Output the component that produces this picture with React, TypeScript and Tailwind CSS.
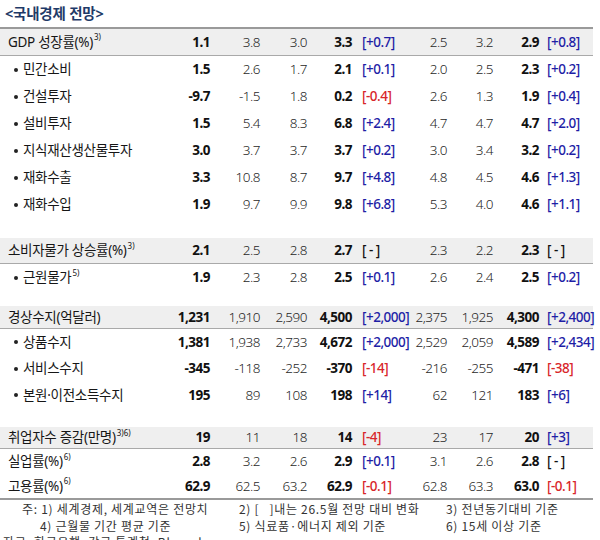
import React from 'react';

type Tone = 'b' | 'r' | 'k';
type RowData = {
    label: string;
    sup?: string;
    bullet?: boolean;
    v: string[];
    d1: [string, Tone];
    d2: [string, Tone];
};

const rows: Record<string, RowData> = {
    gdp: { label: 'GDP 성장률(%)', sup: '3)', v: ['1.1', '3.8', '3.0', '3.3', '2.5', '3.2', '2.9'], d1: ['[+0.7]', 'b'], d2: ['[+0.8]', 'b'] },
    c1: { label: '민간소비', bullet: true, v: ['1.5', '2.6', '1.7', '2.1', '2.0', '2.5', '2.3'], d1: ['[+0.1]', 'b'], d2: ['[+0.2]', 'b'] },
    c2: { label: '건설투자', bullet: true, v: ['-9.7', '-1.5', '1.8', '0.2', '2.6', '1.3', '1.9'], d1: ['[-0.4]', 'r'], d2: ['[+0.4]', 'b'] },
    c3: { label: '설비투자', bullet: true, v: ['1.5', '5.4', '8.3', '6.8', '4.7', '4.7', '4.7'], d1: ['[+2.4]', 'b'], d2: ['[+2.0]', 'b'] },
    c4: { label: '지식재산생산물투자', bullet: true, v: ['3.0', '3.7', '3.7', '3.7', '3.0', '3.4', '3.2'], d1: ['[+0.2]', 'b'], d2: ['[+0.2]', 'b'] },
    c5: { label: '재화수출', bullet: true, v: ['3.3', '10.8', '8.7', '9.7', '4.8', '4.5', '4.6'], d1: ['[+4.8]', 'b'], d2: ['[+1.3]', 'b'] },
    c6: { label: '재화수입', bullet: true, v: ['1.9', '9.7', '9.9', '9.8', '5.3', '4.0', '4.6'], d1: ['[+6.8]', 'b'], d2: ['[+1.1]', 'b'] },
    cpi: { label: '소비자물가 상승률(%)', sup: '3)', v: ['2.1', '2.5', '2.8', '2.7', '2.3', '2.2', '2.3'], d1: ['[ - ]', 'k'], d2: ['[ - ]', 'k'] },
    core: { label: '근원물가', sup: '5)', bullet: true, v: ['1.9', '2.3', '2.8', '2.5', '2.6', '2.4', '2.5'], d1: ['[+0.1]', 'b'], d2: ['[+0.2]', 'b'] },
    ca: { label: '경상수지(억달러)', v: ['1,231', '1,910', '2,590', '4,500', '2,375', '1,925', '4,300'], d1: ['[+2,000]', 'b'], d2: ['[+2,400]', 'b'] },
    ca1: { label: '상품수지', bullet: true, v: ['1,381', '1,938', '2,733', '4,672', '2,529', '2,059', '4,589'], d1: ['[+2,000]', 'b'], d2: ['[+2,434]', 'b'] },
    ca2: { label: '서비스수지', bullet: true, v: ['-345', '-118', '-252', '-370', '-216', '-255', '-471'], d1: ['[-14]', 'r'], d2: ['[-38]', 'r'] },
    ca3: { label: '본원·이전소득수지', bullet: true, v: ['195', '89', '108', '198', '62', '121', '183'], d1: ['[+14]', 'b'], d2: ['[+6]', 'b'] },
    emp: { label: '취업자수 증감(만명)', sup: '3)6)', v: ['19', '11', '18', '14', '23', '17', '20'], d1: ['[-4]', 'r'], d2: ['[+3]', 'b'] },
    un: { label: '실업률(%)', sup: '6)', v: ['2.8', '3.2', '2.6', '2.9', '3.1', '2.6', '2.8'], d1: ['[+0.1]', 'b'], d2: ['[ - ]', 'k'] },
    er: { label: '고용률(%)', sup: '6)', v: ['62.9', '62.5', '63.2', '62.9', '62.8', '63.3', '63.0'], d1: ['[-0.1]', 'r'], d2: ['[-0.1]', 'r'] },
};

const toneClass: Record<Tone, string> = {
    b: 'text-[#1e1ea6]',
    r: 'text-[#d8262a]',
    k: 'text-[#111]',
};

const Row: React.FC<{ r: RowData; h: string; gray?: boolean; line?: boolean }> = ({ r, h, gray, line }) => {
    const [a, b, c, d, e, f, g] = r.v;
    return (
        <div
            className={`grid grid-cols-[170px_40px_50px_47px_45px_58px_37px_46px_46px_54px] items-center text-[13.5px] tracking-[-0.5px] ${h} ${gray ? 'bg-[#efefef]' : ''} ${line ? 'border-b border-[#a9a9a9]' : ''}`}
        >
            <div className={`flex items-center text-[#161616] whitespace-nowrap tracking-[-0.3px] ${r.bullet ? 'pl-[14px]' : 'pl-[8px]'}`}>
                {r.bullet && <span className="mr-[5px] w-[4px] h-[4px] rounded-full bg-[#222] shrink-0" />}
                <span>{r.label}</span>
                {r.sup && <sup className="text-[8px] -top-[5px] ml-[1px] tracking-normal">{r.sup}</sup>}
            </div>
            <div className="text-right font-bold text-[#111]">{a}</div>
            <div className="text-right font-light text-[#1f1f1f]">{b}</div>
            <div className="text-right font-light text-[#1f1f1f]">{c}</div>
            <div className="text-right font-bold text-[#111]">{d}</div>
            <div className={`pl-[10px] whitespace-nowrap font-medium ${toneClass[r.d1[1]]}`}>{r.d1[0]}</div>
            <div className="text-right font-light text-[#1f1f1f]">{e}</div>
            <div className="text-right font-light text-[#1f1f1f]">{f}</div>
            <div className="text-right font-bold text-[#111]">{g}</div>
            <div className={`pl-[8px] whitespace-nowrap font-medium ${toneClass[r.d2[1]]}`}>{r.d2[0]}</div>
        </div>
    );
};

export default function App() {
    return (
        <div
            className="w-[600px] h-[540px] overflow-hidden bg-white"
            style={{ fontFamily: '"Noto Sans", "Noto Sans CJK KR", sans-serif' }}
        >
            <div className="h-[27px] flex items-center pl-[5px] pt-[1px] text-[14.5px] font-bold text-[#1f3a68] tracking-[-0.2px]">
                &lt;국내경제 전망&gt;
            </div>
            <div className="w-[593px] border-t-2 border-[#9a9a9a]">
                <Row r={rows.gdp} h="h-[27px]" gray line />
                <Row r={rows.c1} h="h-[27px]" />
                <Row r={rows.c2} h="h-[27px]" />
                <Row r={rows.c3} h="h-[27px]" />
                <Row r={rows.c4} h="h-[27px]" />
                <Row r={rows.c5} h="h-[27px]" />
                <Row r={rows.c6} h="h-[27px]" />
                <div className="h-[20px]" />
                <Row r={rows.cpi} h="h-[26px]" gray line />
                <Row r={rows.core} h="h-[27px]" />
                <div className="h-[15px]" />
                <Row r={rows.ca} h="h-[23px]" gray line />
                <Row r={rows.ca1} h="h-[26px]" />
                <Row r={rows.ca2} h="h-[27px]" />
                <Row r={rows.ca3} h="h-[26px]" />
                <div className="h-[19px]" />
                <Row r={rows.emp} h="h-[22px]" gray line />
                <Row r={rows.un} h="h-[25px]" />
                <Row r={rows.er} h="h-[24px]" />
            </div>
            <div
                className="w-[593px] border-t-2 border-[#9a9a9a] pt-[1px] text-[12px] leading-[16.5px] text-[#333] tracking-[0.7px]"
                style={{ fontFamily: '"Noto Sans CJK KR", sans-serif' }}
            >
                <div className="flex h-[16.5px]">
                    <div className="w-[239px] pl-[22px] whitespace-nowrap">주: 1) 세계경제, 세계교역은 전망치</div>
                    <div className="w-[207px] whitespace-nowrap">2) [&nbsp;&nbsp;&nbsp;]내는 26.5월 전망 대비 변화</div>
                    <div className="whitespace-nowrap">3) 전년동기대비 기준</div>
                </div>
                <div className="flex h-[16.5px]">
                    <div className="w-[239px] pl-[40px] whitespace-nowrap">4) 근월물 기간 평균 기준</div>
                    <div className="w-[207px] whitespace-nowrap">5) 식료품·에너지 제외 기준</div>
                    <div className="whitespace-nowrap">6) 15세 이상 기준</div>
                </div>
                <div className="h-[16.5px] pl-[3px] whitespace-nowrap">자료: 한국은행, 각국 통계청, Bloomberg</div>
            </div>
        </div>
    );
}
